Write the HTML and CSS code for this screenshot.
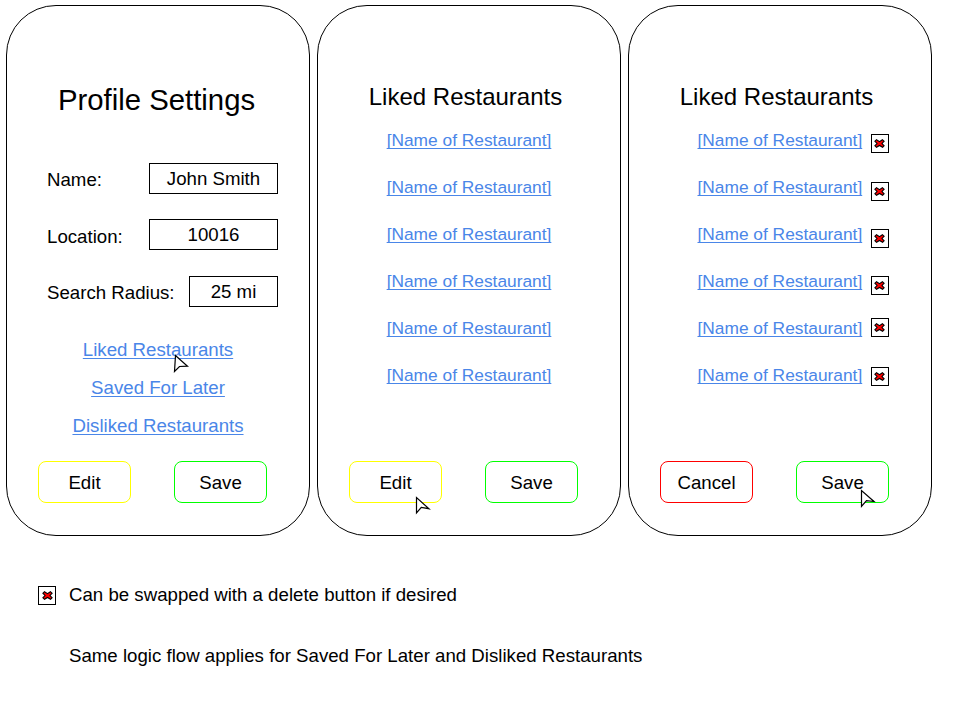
FILE: index.html
```
<!DOCTYPE html>
<html lang="en">
<head>
<meta charset="utf-8">
<title>Profile Settings</title>
<link rel="stylesheet" href="styles.css">
</head>
<body>
<svg class="defs" aria-hidden="true">
  <symbol id="cross" viewBox="0 0 11 11">
    <path d="M2.5 1.7 5.5 3.7 8.4 1.7 10.1 3.2 8 5.5 10.1 7.8 8.6 9.3 5.5 7.5 2.5 9.3 0.9 7.8 3 5.5 0.9 3.2Z"/>
  </symbol>
</svg>
<main class="screens">
  <section class="phone">
    <h1 class="title">Profile Settings</h1>
    <div class="fields">
      <div class="field"><span class="label">Name:</span><span class="value">John Smith</span></div>
      <div class="field"><span class="label">Location:</span><span class="value">10016</span></div>
      <div class="field"><span class="label">Search Radius:</span><span class="value short">25 mi</span></div>
    </div>
    <nav class="links">
      <a>Liked Restaurants</a>
      <a>Saved For Later</a>
      <a>Disliked Restaurants</a>
    </nav>
    <div class="actions"><span class="button edit">Edit</span><span class="button save">Save</span></div>
    <svg class="cursor on-link" viewBox="0 0 18 20"><path d="M2.5 1.5 1.5 17.5 6.5 12.5 14.5 12.2Z"/></svg>
  </section>
  <section class="phone">
    <h2 class="heading">Liked Restaurants</h2>
    <div class="list">
      <a>[Name of Restaurant]</a>
      <a>[Name of Restaurant]</a>
      <a>[Name of Restaurant]</a>
      <a>[Name of Restaurant]</a>
      <a>[Name of Restaurant]</a>
      <a>[Name of Restaurant]</a>
    </div>
    <div class="actions"><span class="button edit">Edit</span><span class="button save">Save</span></div>
    <svg class="cursor on-edit" viewBox="0 0 18 20"><path d="M1.5 1.5V16.8L6.3 11.4 14 12.7Z"/></svg>
  </section>
  <section class="phone">
    <h2 class="heading">Liked Restaurants</h2>
    <div class="removable">
      <div class="list">
        <a>[Name of Restaurant]</a>
        <a>[Name of Restaurant]</a>
        <a>[Name of Restaurant]</a>
        <a>[Name of Restaurant]</a>
        <a>[Name of Restaurant]</a>
        <a>[Name of Restaurant]</a>
      </div>
      <div class="removes">
        <span class="remove"><svg><use href="#cross"/></svg></span>
        <span class="remove"><svg><use href="#cross"/></svg></span>
        <span class="remove"><svg><use href="#cross"/></svg></span>
        <span class="remove"><svg><use href="#cross"/></svg></span>
        <span class="remove"><svg><use href="#cross"/></svg></span>
        <span class="remove"><svg><use href="#cross"/></svg></span>
      </div>
    </div>
    <div class="actions"><span class="button cancel">Cancel</span><span class="button save">Save</span></div>
    <svg class="cursor on-save" viewBox="0 0 18 20"><path d="M1.5 1.5V17.3L6.5 11.6 14 12.5Z"/></svg>
  </section>
</main>
<footer class="notes">
  <div class="note"><span class="remove"><svg><use href="#cross"/></svg></span><p>Can be swapped with a delete button if desired</p></div>
  <div class="note"><p>Same logic flow applies for Saved For Later and Disliked Restaurants</p></div>
</footer>
</body>
</html>
```
FILE: styles.css
```
* { box-sizing: border-box; }
body {
  margin: 0;
  width: 960px;
  height: 720px;
  overflow: hidden;
  background: #fff;
  color: #000;
  font: 18.667px/31px "Liberation Sans", Arial, sans-serif;
}
h1, h2, p { margin: 0; font-weight: 400; }
.defs { position: absolute; width: 0; height: 0; }
.screens { display: flex; gap: 7px; padding: 5px 0 0 6px; }
.phone {
  position: relative;
  display: flex;
  flex-direction: column;
  width: 304px;
  height: 531px;
  padding: 77px 31px 32px;
  border: 1px solid #000;
  border-radius: 50px;
}
.title { font-size: 29.333px; line-height: 34px; text-align: center; margin-right: 3px; }
.heading { font-size: 24px; line-height: 28px; text-align: center; margin-right: 7px; }
.fields { margin: 46px 0 0 9px; }
.field { display: flex; justify-content: space-between; height: 31px; margin-bottom: 25px; }
.field:nth-child(2) { margin-bottom: 26px; }
.field:last-child { margin-bottom: 0; }
.label { padding-top: 1px; }
.field:nth-child(2) .label { padding-top: 2px; }
.value { width: 129px; height: 31px; line-height: 29px; border: 1px solid #000; text-align: center; }
.short { width: 89px; }
.links, .list { display: flex; flex-direction: column; align-items: center; }
.links { margin-top: 24px; line-height: 38px; }
.list { margin-top: 6px; font-size: 17.333px; line-height: 47px; }
a {
  color: #4a86e8;
  text-decoration: underline 1.4px;
  text-decoration-thickness: 1.4px;
  text-decoration-skip-ink: none;
  text-underline-offset: 2px;
}
.removable { display: flex; }
.removable .list { margin-left: 37.5px; margin-right: -0.5px; }
.removes { display: flex; flex-direction: column; gap: 28px; margin: 23px 0 0 9px; }
.remove {
  display: flex;
  align-items: center;
  justify-content: center;
  flex: none;
  width: 18px;
  height: 19px;
  border: 1px solid #000;
}
.removes .remove:nth-child(2) { margin-top: 1px; }
.removes .remove:nth-child(5) { margin: -5px 0 2px; }
.remove svg { width: 11px; height: 11px; fill: #f00; stroke: #000; stroke-width: 1.1; }
.actions { display: flex; justify-content: space-between; margin-top: auto; padding-right: 11px; }
.button { width: 93px; height: 42px; line-height: 41px; border: 1px solid; border-radius: 8px; text-align: center; }
.edit { border-color: #ff0; }
.save { border-color: #0f0; }
.cancel { border-color: #f00; }
.cursor { position: absolute; width: 18px; height: 20px; fill: #fff; stroke: #000; stroke-width: 1.2; }
.on-link { left: 166px; top: 348px; }
.on-edit { left: 97px; top: 490px; }
.on-save { left: 231px; top: 483px; }
.notes { display: flex; flex-direction: column; gap: 30px; padding: 44px 0 0 38px; }
.note { display: flex; align-items: center; height: 31px; }
.note p { margin: -2px 0 0 13px; }
.note p:first-child { margin-left: 31px; }
```
